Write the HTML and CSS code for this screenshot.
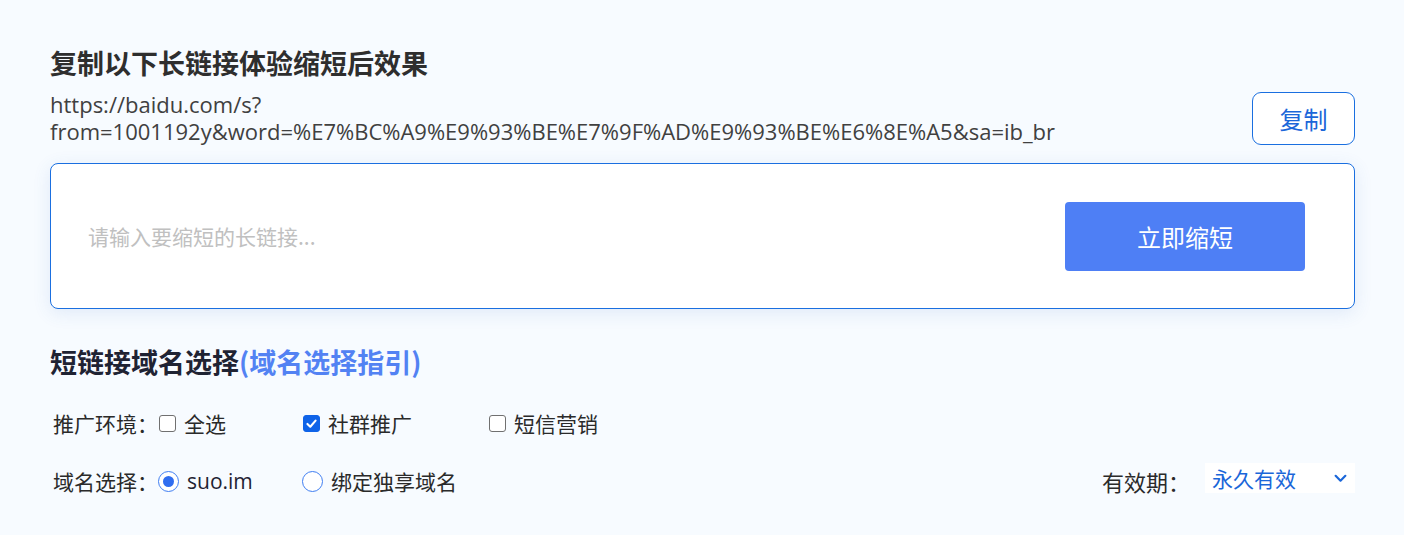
FILE: index.html
```html
<!DOCTYPE html>
<html lang="zh">
<head>
<meta charset="utf-8">
<title>短链接</title>
<link rel="stylesheet" href="styles.css">
</head>
<body>
<main class="page">
  <h2 class="title">复制以下长链接体验缩短后效果</h2>
  <div class="sample">
    <p class="sample-url">https://baidu.com/s?<br>from=1001192y&amp;word=%E7%BC%A9%E9%93%BE%E7%9F%AD%E9%93%BE%E6%8E%A5&amp;sa=ib_br</p>
    <button class="copy-btn">复制</button>
  </div>
  <div class="shorten-box">
    <span class="placeholder">请输入要缩短的长链接...</span>
    <button class="shorten-btn">立即缩短</button>
  </div>
  <h2 class="title section-title">短链接域名选择<a class="guide">(域名选择指引)</a></h2>
  <div class="row row-env">
    <span class="label">推广环境：</span>
    <label class="opt opt-w1"><span class="cb"></span>全选</label>
    <label class="opt opt-w2"><span class="cb checked"><svg viewBox="0 0 16 16" width="13" height="13"><path d="M3 8.5 L6.5 12 L13 4.5" fill="none" stroke="#fff" stroke-width="2.6" stroke-linecap="round" stroke-linejoin="round"/></svg></span>社群推广</label>
    <label class="opt"><span class="cb"></span>短信营销</label>
  </div>
  <div class="row row-domain">
    <span class="label">域名选择：</span>
    <label class="opt opt-w1 radio-opt"><span class="rd on"></span><span class="latin">suo.im</span></label>
    <label class="opt radio-opt"><span class="rd"></span>绑定独享域名</label>
    <div class="expire">
      <span class="expire-label">有效期：</span>
      <div class="select">
        <span>永久有效</span>
        <svg viewBox="0 0 12 8" width="13" height="9"><path d="M1.5 1.5 L6 6 L10.5 1.5" fill="none" stroke="#1a66d9" stroke-width="2" stroke-linecap="round" stroke-linejoin="round"/></svg>
      </div>
    </div>
  </div>
</main>
</body>
</html>
```
FILE: styles.css
```css
* { box-sizing: border-box; }
html, body { margin: 0; padding: 0; }
body {
  background: #f7fbff;
  font-family: "Noto Sans CJK SC", "Noto Sans", sans-serif;
  color: #333;
}
.page {
  padding: 45px 49px 0 50px;
}
.title {
  margin: 0;
  font-size: 27px;
  line-height: 36px;
  font-weight: 700;
  color: #2e2e2e;
}
.sample {
  display: flex;
  align-items: center;
  justify-content: space-between;
  margin-top: 10px;
}
.sample-url {
  margin: 0;
  font-size: 22px;
  line-height: 27px;
  color: #404040;
  font-family: "Open Sans", "Noto Sans CJK SC", sans-serif;
}
.copy-btn {
  width: 103px;
  height: 53px;
  border: 1px solid #1a6fe0;
  border-radius: 9px;
  background: #fff;
  color: #1a66d9;
  font-family: "Noto Sans CJK SC", sans-serif;
  font-size: 24px;
  padding: 0;
}
.shorten-box {
  margin-top: 18px;
  height: 146px;
  background: #fff;
  border: 1px solid #1a6fe0;
  border-radius: 8px;
  box-shadow: 0 4px 18px rgba(60, 110, 200, 0.12);
  display: flex;
  align-items: center;
  justify-content: space-between;
  padding: 0 49px 0 37px;
}
.placeholder {
  font-size: 21px;
  color: #c0c0c0;
}
.shorten-btn {
  width: 240px;
  height: 69px;
  border: none;
  border-radius: 4px;
  background: #4e7ff5;
  color: #fff;
  font-family: "Noto Sans CJK SC", sans-serif;
  font-size: 24px;
  padding: 0;
}
.section-title {
  margin-top: 35px;
  color: #1f2333;
}
.guide {
  color: #5282f3;
}
.row {
  display: flex;
  align-items: center;
  font-size: 21px;
  color: #2a2a2a;
}
.row-env {
  margin-top: 28px;
  height: 30px;
}
.row-domain {
  margin-top: 28px;
  height: 30px;
}
.label {
  padding-left: 3px;
  font-size: 21px;
}
.opt {
  display: flex;
  align-items: center;
}
.opt-w1 { width: 144px; }
.opt-w2 { width: 186px; }
.cb {
  width: 17px;
  height: 17px;
  border: 1.5px solid #707070;
  border-radius: 3px;
  margin: 0 8px 0 1px;
  display: inline-flex;
  align-items: center;
  justify-content: center;
  background: #fff;
}
.cb.checked {
  background: #0e63e8;
  border-color: #0e63e8;
}
.rd {
  width: 21px;
  height: 21px;
  border: 1.5px solid #3f7ef2;
  border-radius: 50%;
  margin-right: 8px;
  display: inline-flex;
  align-items: center;
  justify-content: center;
  background: #fff;
}
.rd.on::after {
  content: "";
  width: 11px;
  height: 11px;
  border-radius: 50%;
  background: #2f6df0;
}
.latin {
  font-family: "Open Sans", sans-serif;
  font-size: 21px;
  color: #1f2333;
}
.expire {
  margin-left: auto;
  display: flex;
  align-items: center;
}
.expire-label {
  font-size: 22px;
  color: #2a2a2a;
  margin-right: 15px;
}
.select {
  width: 150px;
  height: 30px;
  margin-bottom: 6px;
  background: #fff;
  display: flex;
  align-items: center;
  justify-content: space-between;
  padding: 0 8px 0 7px;
  color: #1a66d9;
  font-size: 21px;
}
```
